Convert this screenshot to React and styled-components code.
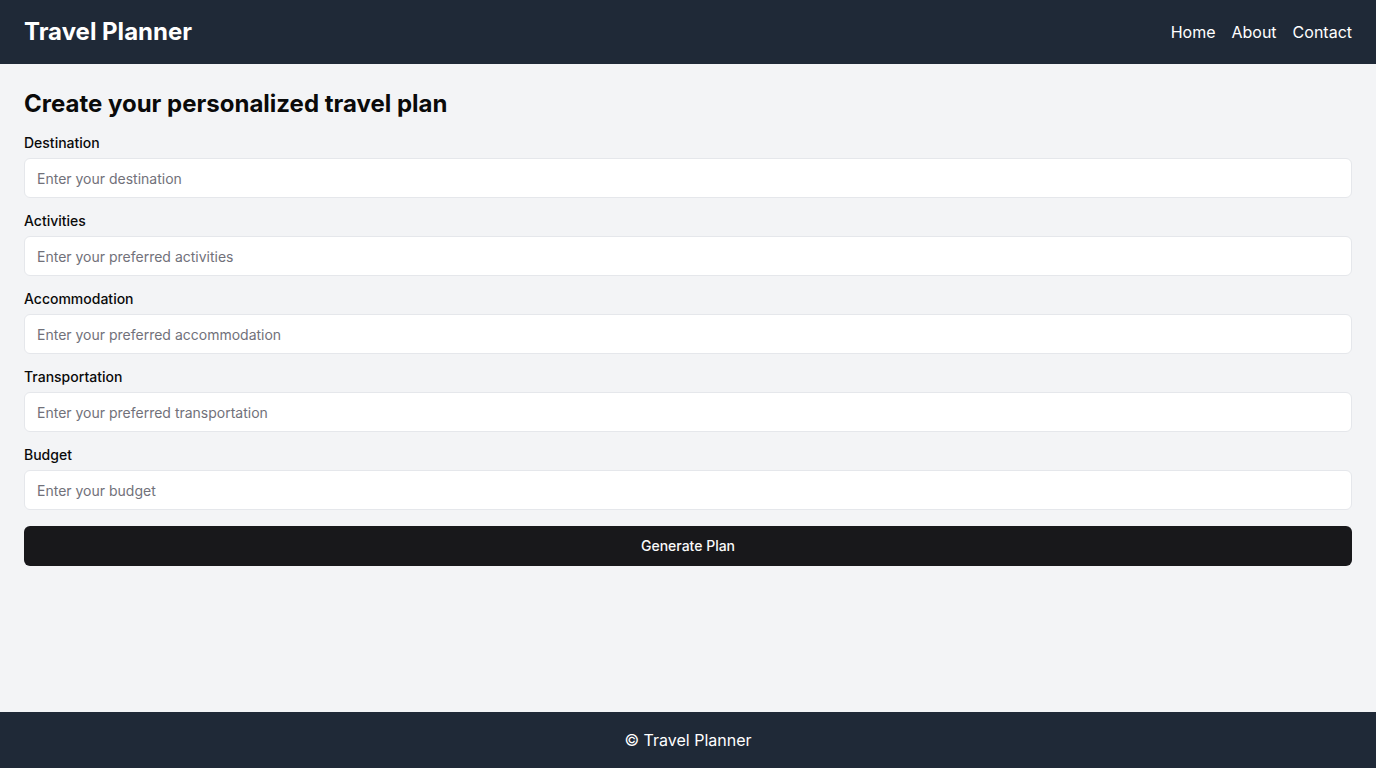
import React from "react";
import styled, { createGlobalStyle } from "styled-components";

const Global = createGlobalStyle`
  * { box-sizing: border-box; }
  body { margin: 0; font-family: Inter, "Noto Sans", sans-serif; background: #f3f4f6; color: #0a0a0a; }
`;

const Page = styled.div`
  min-height: 100vh;
  display: flex;
  flex-direction: column;
`;

const Header = styled.header`
  height: 64px;
  background: #1f2937;
  color: #fff;
  display: flex;
  align-items: center;
  justify-content: space-between;
  padding: 0 24px;
`;

const Brand = styled.h1`
  margin: 0;
  font-size: 24px;
  line-height: 32px;
  font-weight: 700;
`;

const Nav = styled.nav`
  display: flex;
  gap: 16px;
`;

const NavLink = styled.a`
  color: #fff;
  text-decoration: none;
  font-size: 16px;
  line-height: 24px;
`;

const Main = styled.main`
  flex: 1;
  padding: 24px;
`;

const Title = styled.h2`
  margin: 0 0 12px;
  font-size: 24px;
  line-height: 32px;
  font-weight: 700;
`;

const Form = styled.form`
  display: flex;
  flex-direction: column;
  gap: 12px;
`;

const Field = styled.div`
  display: flex;
  flex-direction: column;
  gap: 5px;
`;

const Label = styled.label`
  padding-top: 1px;
  font-size: 14px;
  line-height: 20px;
  font-weight: 500;
`;

const Input = styled.input`
  height: 40px;
  border: 1px solid #e5e7eb;
  border-radius: 6px;
  background: #fff;
  padding: 0 12px;
  font-family: inherit;
  font-size: 14px;
  outline: none;
  &::placeholder { color: #71717a; }
`;

const Button = styled.button`
  margin-top: 4px;
  height: 40px;
  padding: 0 16px 1px;
  border: none;
  border-radius: 6px;
  background: #18181b;
  color: #fafafa;
  font-family: inherit;
  font-size: 14px;
  font-weight: 500;
`;

const Footer = styled.footer`
  height: 56px;
  background: #1f2937;
  color: #fff;
  display: flex;
  align-items: center;
  justify-content: center;
  font-size: 16px;
`;

const fields = [
  ["Destination", "Enter your destination"],
  ["Activities", "Enter your preferred activities"],
  ["Accommodation", "Enter your preferred accommodation"],
  ["Transportation", "Enter your preferred transportation"],
  ["Budget", "Enter your budget"],
];

export default function App() {
  return (
    <Page>
      <Global />
      <Header>
        <Brand>Travel Planner</Brand>
        <Nav>
          <NavLink href="#">Home</NavLink>
          <NavLink href="#">About</NavLink>
          <NavLink href="#">Contact</NavLink>
        </Nav>
      </Header>
      <Main>
        <Title>Create your personalized travel plan</Title>
        <Form onSubmit={(e) => e.preventDefault()}>
          {fields.map(([l, p]) => (
            <Field key={l}>
              <Label>{l}</Label>
              <Input placeholder={p} />
            </Field>
          ))}
          <Button type="submit">Generate Plan</Button>
        </Form>
      </Main>
      <Footer>© Travel Planner</Footer>
    </Page>
  );
}
